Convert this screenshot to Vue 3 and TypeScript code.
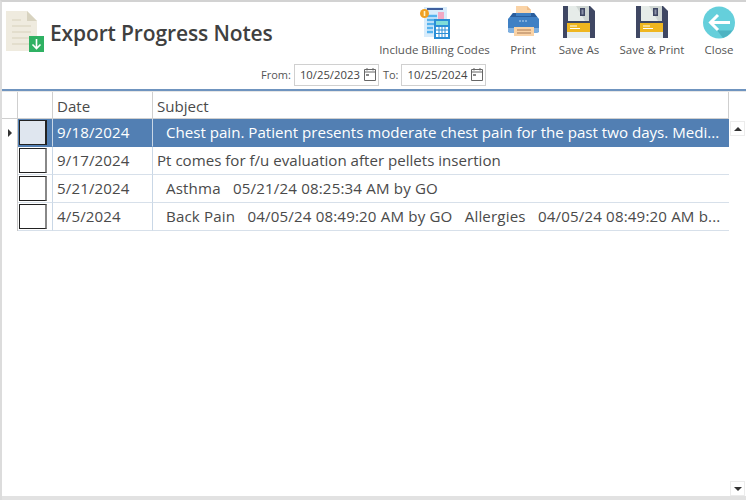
<script setup lang="ts">
interface Row { date: string; subject: string; indent: boolean; selected?: boolean; stamped?: boolean }
const rows: Row[] = [
  { date: '9/18/2024', subject: 'Chest pain. Patient presents moderate chest pain for the past two days. Medi...', indent: true, selected: true },
  { date: '9/17/2024', subject: 'Pt comes for f/u evaluation after pellets insertion', indent: false },
  { date: '5/21/2024', subject: 'Asthma   05/21/24 08:25:34 AM by GO', indent: true, stamped: true },
  { date: '4/5/2024', subject: 'Back Pain   04/05/24 08:49:20 AM by GO   Allergies   04/05/24 08:49:20 AM b...', indent: true, stamped: true },
]
const dates = [
  { label: 'From:', value: '10/25/2023' },
  { label: 'To:', value: '10/25/2024' },
]
</script>

<template>
  <div class="window">
    <header class="header">
      <div class="top">
        <div class="brand">
          <svg class="doc" width="44" height="42" viewBox="0 0 44 42">
            <path d="M0 0H21L31 10V40H0Z" fill="#efebdf" />
            <path d="M21 0L31 10H21Z" fill="#d8d3c0" />
            <path d="M6 9H15M6 15H25M6 21H25M6 27H25M6 33H25" stroke="#dfdac8" stroke-width="1.6" />
            <rect x="23" y="25" width="15" height="16" fill="#2fb163" />
            <path d="M30.500 28V37M26.500 33.500L30.500 37.500L34.500 33.500" stroke="#fff" stroke-width="1.600" fill="none" />
          </svg>
          <h1 class="title">Export Progress Notes</h1>
        </div>
        <nav class="tools">
          <button class="tool billing">
            <svg width="32" height="33" viewBox="0 0 32 33">
              <rect x="5" y="1" width="23" height="30" fill="#d8ecfb" />
              <path d="M8 3H24" stroke="#3f5f9e" stroke-width="2" />
              <rect x="19" y="6" width="6" height="12" fill="#f2a9c4" />
              <path d="M8 10H18M8 14H18M8 18H18M8 22H14M8 26H14" stroke="#55b2ee" stroke-width="2.400" />
              <circle cx="5.500" cy="7.500" r="4.500" fill="#f0a022" />
              <rect x="4.700" y="5" width="1.600" height="5" fill="#fff3c4" />
              <rect x="15" y="13" width="16" height="20" fill="#2a8ed6" />
              <rect x="17" y="15" width="12" height="4" fill="#7fdcd8" />
              <path d="M17 21H29V31H17Z" fill="#fff" />
              <path d="M20 21V31M23 21V31M26 21V31M17 24H29M17 27.500H29" stroke="#2a8ed6" stroke-width="1" />
            </svg>
            <span>Include Billing Codes</span>
          </button>
          <button class="tool print">
            <svg width="33" height="33" viewBox="0 0 33 33">
              <path d="M9 0H20L24 4V12H9Z" fill="#fad3a6" />
              <path d="M20 0L24 4H20Z" fill="#eebd8a" />
              <path d="M6 7H27L32 13V26H1V13Z" fill="#3f80c4" />
              <path d="M6 7H9V10H24V7H27L30 11H3Z" fill="#2a5d9c" />
              <path d="M1 22H32V25Q32 27 30 27H3Q1 27 1 25Z" fill="#7fb0e0" />
              <rect x="7" y="21" width="20" height="9" fill="#fad3a6" />
              <path d="M10 24H24M10 27H24" stroke="#a87a55" stroke-width="1.200" />
              <path d="M12 15H21" stroke="#bcd7f2" stroke-width="1" stroke-dasharray="2 1" />
            </svg>
            <span>Print</span>
          </button>
          <button class="tool save">
            <svg width="33" height="33" viewBox="0 0 33 33">
              <path d="M0 0H27L32 5V32H0Z" fill="#3f4763" />
              <path d="M5 0H26V15H5Z" fill="#e6ece9" />
              <path d="M13 0H26V15H22Z" fill="#cfd6d3" />
              <rect x="17" y="2" width="5" height="8" fill="#3f4763" />
              <rect x="18.500" y="3.500" width="2" height="5" fill="#8b92a8" />
              <rect x="4" y="17" width="23" height="9" fill="#efb61f" />
              <rect x="4" y="26" width="23" height="6" fill="#e8eeec" />
              <path d="M7 20H14M7 22.500H17" stroke="#fff" stroke-width="1" />
            </svg>
            <span>Save As</span>
          </button>
          <button class="tool saveprint">
            <svg width="33" height="33" viewBox="0 0 33 33">
              <path d="M0 0H27L32 5V32H0Z" fill="#3f4763" />
              <path d="M5 0H26V15H5Z" fill="#e6ece9" />
              <path d="M13 0H26V15H22Z" fill="#cfd6d3" />
              <rect x="17" y="2" width="5" height="8" fill="#3f4763" />
              <rect x="18.500" y="3.500" width="2" height="5" fill="#8b92a8" />
              <rect x="4" y="17" width="23" height="9" fill="#efb61f" />
              <rect x="4" y="26" width="23" height="6" fill="#e8eeec" />
              <path d="M7 20H14M7 22.500H17" stroke="#fff" stroke-width="1" />
            </svg>
            <span>Save &amp; Print</span>
          </button>
          <button class="tool close">
            <svg width="32" height="32" viewBox="0 0 32 32">
              <circle cx="16" cy="16" r="16" fill="#65cfdb" />
              <path d="M8 16L16 24H30L31 20Q29 28 20 31.500L8 16Z" fill="#4eb3c2" />
              <path d="M15 8.500L7.500 16L15 23.500M8 16H27" stroke="#fff" stroke-width="3" fill="none" />
            </svg>
            <span>Close</span>
          </button>
        </nav>
      </div>
      <div class="filters">
        <template v-for="d in dates" :key="d.label">
          <label class="flabel">{{ d.label }}</label>
          <div class="dbox">
            <span>{{ d.value }}</span>
            <svg width="13" height="13" viewBox="0 0 13 13">
              <path d="M.5 1.500H11.500V12.500H.5ZM.5 4H11.500M3 0V2.500M9 0V2.500" stroke="#666" fill="none" />
              <rect x="2" y="6" width="3" height="2" fill="#888" />
            </svg>
          </div>
        </template>
      </div>
    </header>
    <div class="rule"></div>
    <main class="grid">
      <div class="table">
        <div class="hrow">
          <div class="c0"></div>
          <div class="c1"></div>
          <div class="c2">Date</div>
          <div class="c3">Subject</div>
        </div>
        <div v-for="r in rows" :key="r.date" class="row" :class="{ sel: r.selected }">
          <div class="c0"><i v-if="r.selected" class="arrow"></i></div>
          <div class="c1"><span class="check"></span></div>
          <div class="c2 when">{{ r.date }}</div>
          <div class="c3" :class="{ indent: r.indent, stamp: r.stamped }">{{ r.subject }}</div>
        </div>
      </div>
      <aside class="sbar">
        <div class="sbtn"><i class="up"></i></div>
        <div class="sbtn"><i class="down"></i></div>
      </aside>
    </main>
    <div class="bottom"></div>
  </div>
</template>

<style>
html, body { margin: 0; background: #fff; overflow: hidden; }
</style>

<style scoped>
.window {
  width: 746px;
  height: 500px;
  box-sizing: border-box;
  border-top: 2px solid #d2d2d2;
  border-left: 2px solid #dcdcdc;
  display: flex;
  flex-direction: column;
  background: #fff;
  font-family: "Open Sans", "Noto Sans", sans-serif;
  color: #444;
  overflow: hidden;
}
.header { height: 87px; flex: none; display: flex; flex-direction: column; }
.top { height: 60px; flex: none; display: flex; justify-content: space-between; }
.brand { display: flex; align-items: flex-start; padding: 9px 0 0 4px; }
.doc { flex: none; }
.title {
  margin: 6px 0 0 0;
  font-size: 21px;
  line-height: 32px;
  font-weight: 600;
  color: #404040;
  letter-spacing: -0.13px;
  white-space: nowrap;
}
.tools { display: flex; position: relative; width: 367px; height: 60px; }
.tool {
  position: absolute;
  top: 4px;
  display: flex;
  flex-direction: column;
  align-items: center;
  padding: 0;
  background: none;
  border: 0;
  font: inherit;
  font-size: 11.500px;
  line-height: 16px;
  color: #555;
  white-space: nowrap;
}
.tool svg { display: block; height: 33px; margin-bottom: 3px; flex: none; }
.tool.billing { left: 0; width: 111px; }
.tool.print { left: 122px; width: 44px; }
.tool.save { left: 178px; width: 44px; }
.tool.saveprint { left: 239px; width: 68px; }
.tool.close { left: 323px; width: 34px; }
.filters {
  height: 25px;
  flex: none;
  display: flex;
  align-items: center;
  justify-content: flex-start;
  padding-left: 259px;
  font-size: 11px;
  color: #555;
}
.flabel { margin-right: 3px; }
.dbox {
  width: 85px;
  height: 22px;
  flex: none;
  box-sizing: border-box;
  border: 1px solid #d0d0d0;
  display: flex;
  align-items: center;
  justify-content: space-between;
  padding: 0 1px 0 5px;
  margin-right: 4px;
  font-size: 11.300px;
  color: #444;
}
.rule { height: 2px; flex: none; background: #6f94bf; }
.grid {
  flex: 1;
  display: flex;
  min-height: 0;
  border-top: 1px solid #e6e6e6;
}
.table { width: 727px; flex: none; }
.hrow, .row { display: flex; box-sizing: border-box; font-size: 15.100px; color: #4a4a4a; }
.hrow { height: 27px; border-bottom: 1px solid #cfcfcf; }
.hrow > div { line-height: 28px; border-right: 1px solid #cfcfcf; }
.row { height: 28px; line-height: 26px; }
.row > div { border-right: 1px solid #c9d7e6; border-bottom: 1px solid #d7e0ea; }
.row > .c0 { border-bottom: 0; border-right-color: #c8c8c8; }
.c0 { width: 16px; flex: none; box-sizing: border-box; position: relative; }
.c1 { width: 35px; flex: none; box-sizing: border-box; position: relative; }
.c2 { width: 100px; flex: none; box-sizing: border-box; padding-left: 4px; }
.c2.when { letter-spacing: 0.12px; }
.c3 { flex: 1; min-width: 0; box-sizing: border-box; padding-left: 4px; white-space: pre; overflow: hidden; }
.c3.indent { padding-left: 13px; }
.c3.stamp { letter-spacing: 0.16px; }
.row > .c3 { border-right: 0; }
.check {
  position: absolute;
  left: 1px;
  top: 1px;
  box-sizing: border-box;
  width: 28px;
  height: 25px;
  border: 1px solid #222;
  border-right: 2px solid #888;
  background: #fff;
}
.row.sel .c1, .row.sel .c2, .row.sel .c3 { background: #527fb3; color: #fff; border-bottom-color: #527fb3; }
.row.sel .check { background: #dfe6ef; border-right-color: #222; }
.arrow {
  position: absolute;
  left: 6px;
  top: 10px;
  width: 0;
  height: 0;
  border-left: 4px solid #333;
  border-top: 4px solid transparent;
  border-bottom: 4px solid transparent;
}
.sbar {
  flex: 1;
  display: flex;
  flex-direction: column;
  justify-content: space-between;
  padding: 29px 1px 0 1px;
}
.sbtn {
  height: 15px;
  box-sizing: border-box;
  border: 1px solid #ececec;
  display: flex;
  align-items: center;
  justify-content: center;
}
.up, .down { width: 0; height: 0; border-left: 4px solid transparent; border-right: 4px solid transparent; }
.up { border-bottom: 4px solid #333; }
.down { border-top: 4px solid #333; }
.bottom { height: 4px; flex: none; background: #e2e2e2; }
</style>
